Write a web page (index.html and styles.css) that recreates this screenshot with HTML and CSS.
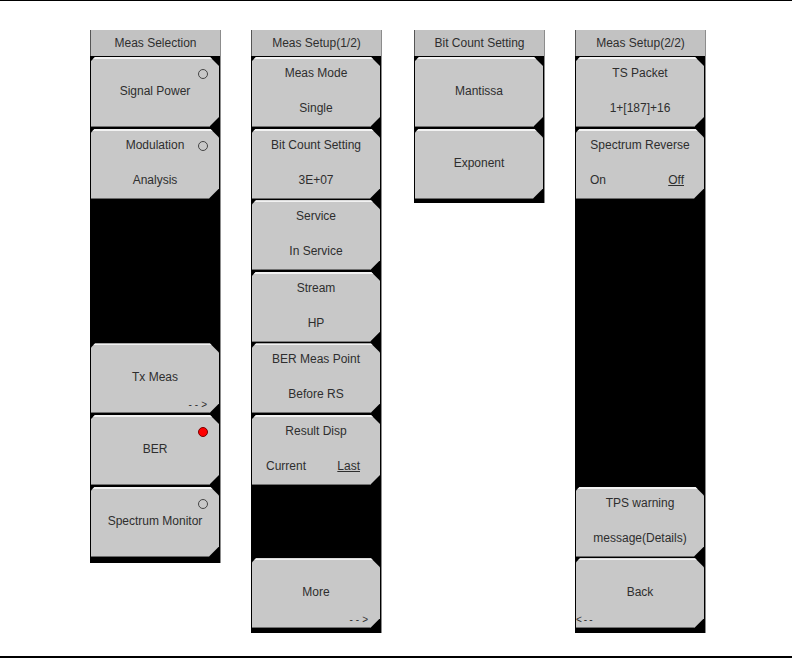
FILE: index.html
```html
<!DOCTYPE html>
<html>
	<head>
		<meta charset="UTF-8">
		<title>Meas menus</title>
		<link rel="stylesheet" href="styles.css">
	</head>
	<body>
		<div class="page">
			<!-- Meas Selection -->
			<div class="menu menu-7">
				<div class="title">Meas Selection</div>
				<div class="key single">Signal Power<span class="radio"></span></div>
				<div class="key two">
					<div class="label">Modulation</div>
					<div class="value">Analysis</div>
					<span class="radio"></span>
				</div>
				<div class="blank"></div>
				<div class="blank"></div>
				<div class="key single">Tx Meas<span class="more">--&gt;</span></div>
				<div class="key single">BER<span class="radio on"></span></div>
				<div class="key single">Spectrum Monitor<span class="radio"></span></div>
			</div>

			<!-- Meas Setup 1/2 -->
			<div class="menu">
				<div class="title">Meas Setup(1/2)</div>
				<div class="key two">
					<div class="label">Meas Mode</div>
					<div class="value">Single</div>
				</div>
				<div class="key two">
					<div class="label">Bit Count Setting</div>
					<div class="value">3E+07</div>
				</div>
				<div class="key two">
					<div class="label">Service</div>
					<div class="value">In Service</div>
				</div>
				<div class="key two">
					<div class="label">Stream</div>
					<div class="value">HP</div>
				</div>
				<div class="key two">
					<div class="label">BER Meas Point</div>
					<div class="value">Before RS</div>
				</div>
				<div class="key two">
					<div class="label">Result Disp</div>
					<div class="value choice"><span>Current</span><span class="sel">Last</span></div>
				</div>
				<div class="blank"></div>
				<div class="key single">More<span class="more">--&gt;</span></div>
			</div>

			<!-- Bit Count Setting -->
			<div class="menu menu-sub">
				<div class="title">Bit Count Setting</div>
				<div class="key single">Mantissa</div>
				<div class="key single">Exponent</div>
			</div>

			<!-- Meas Setup 2/2 -->
			<div class="menu">
				<div class="title">Meas Setup(2/2)</div>
				<div class="key two">
					<div class="label">TS Packet</div>
					<div class="value">1+[187]+16</div>
				</div>
				<div class="key two">
					<div class="label">Spectrum Reverse</div>
					<div class="value choice"><span>On</span><span class="sel">Off</span></div>
				</div>
				<div class="blank"></div>
				<div class="blank"></div>
				<div class="blank"></div>
				<div class="blank"></div>
				<div class="key two">
					<div class="label">TPS warning</div>
					<div class="value">message(Details)</div>
				</div>
				<div class="key single">Back<span class="back">&lt;--</span></div>
			</div>
		</div>
	</body>
</html>
```

FILE: styles.css
```css
*{
	padding: 0;
	margin: 0;
	box-sizing: border-box;
}
body{
	background: #fff;
	font-family: "Liberation Sans", Arial, sans-serif;
	font-size: 12px;
	color: #2e2e2e;
}
.page{
	height: 658px;
	border-top: 1px solid #000;
	border-bottom: 2px solid #000;
	padding: 29px 0 0 90px;
	display: flex;
	align-items: flex-start;
	gap: 30px;
}
.menu{
	width: 131px;
	background: #000;
	padding: 0 1px 3px 1px;
	border-right: 1px solid #8c8c8c;
}
.menu-7{
	padding-bottom: 5px;
}
.menu-sub{
	margin-left: 2px;
}
.menu .title{
	height: 26px;
	margin: 0 -1px 1px -1px;
	background: #c2c2c2;
	border-left: 1px solid #555;
	text-align: center;
	line-height: 26px;
}
.key{
	position: relative;
	height: 70px;
	margin-bottom: 1.6px;
	background: #c8c8c8;
	border-top: 2px solid #f2f2f2;
	border-bottom: 1px solid #707070;
	text-align: center;
	clip-path: polygon(4px 0, calc(100% - 9px) 0, 100% 9px, 100% calc(100% - 10px), calc(100% - 10px) 100%, 0 100%, 0 4px);
}
.blank{
	height: 71.6px;
}
.key.single{
	display: flex;
	align-items: center;
	justify-content: center;
	padding-bottom: 3px;
}
.key.two{
	padding-top: 7px;
	line-height: 14px;
}
.key .value{
	margin-top: 21px;
}
.key .choice{
	display: flex;
	justify-content: space-between;
	padding: 0 20px 0 14px;
}
.choice .sel{
	text-decoration: underline;
}
.radio{
	position: absolute;
	top: 10px;
	right: 11px;
	width: 10px;
	height: 10px;
	border: 1px solid #444;
	border-radius: 50%;
}
.radio.on{
	background: #ff0000;
	border-color: #7a0000;
}
.more{
	position: absolute;
	right: 12px;
	bottom: 1px;
	font-size: 10px;
	letter-spacing: 3px;
	line-height: 12px;
	margin-right: -3px;
}
.back{
	position: absolute;
	left: 0;
	bottom: 1px;
	font-size: 10px;
	letter-spacing: 2px;
	line-height: 12px;
}
```
